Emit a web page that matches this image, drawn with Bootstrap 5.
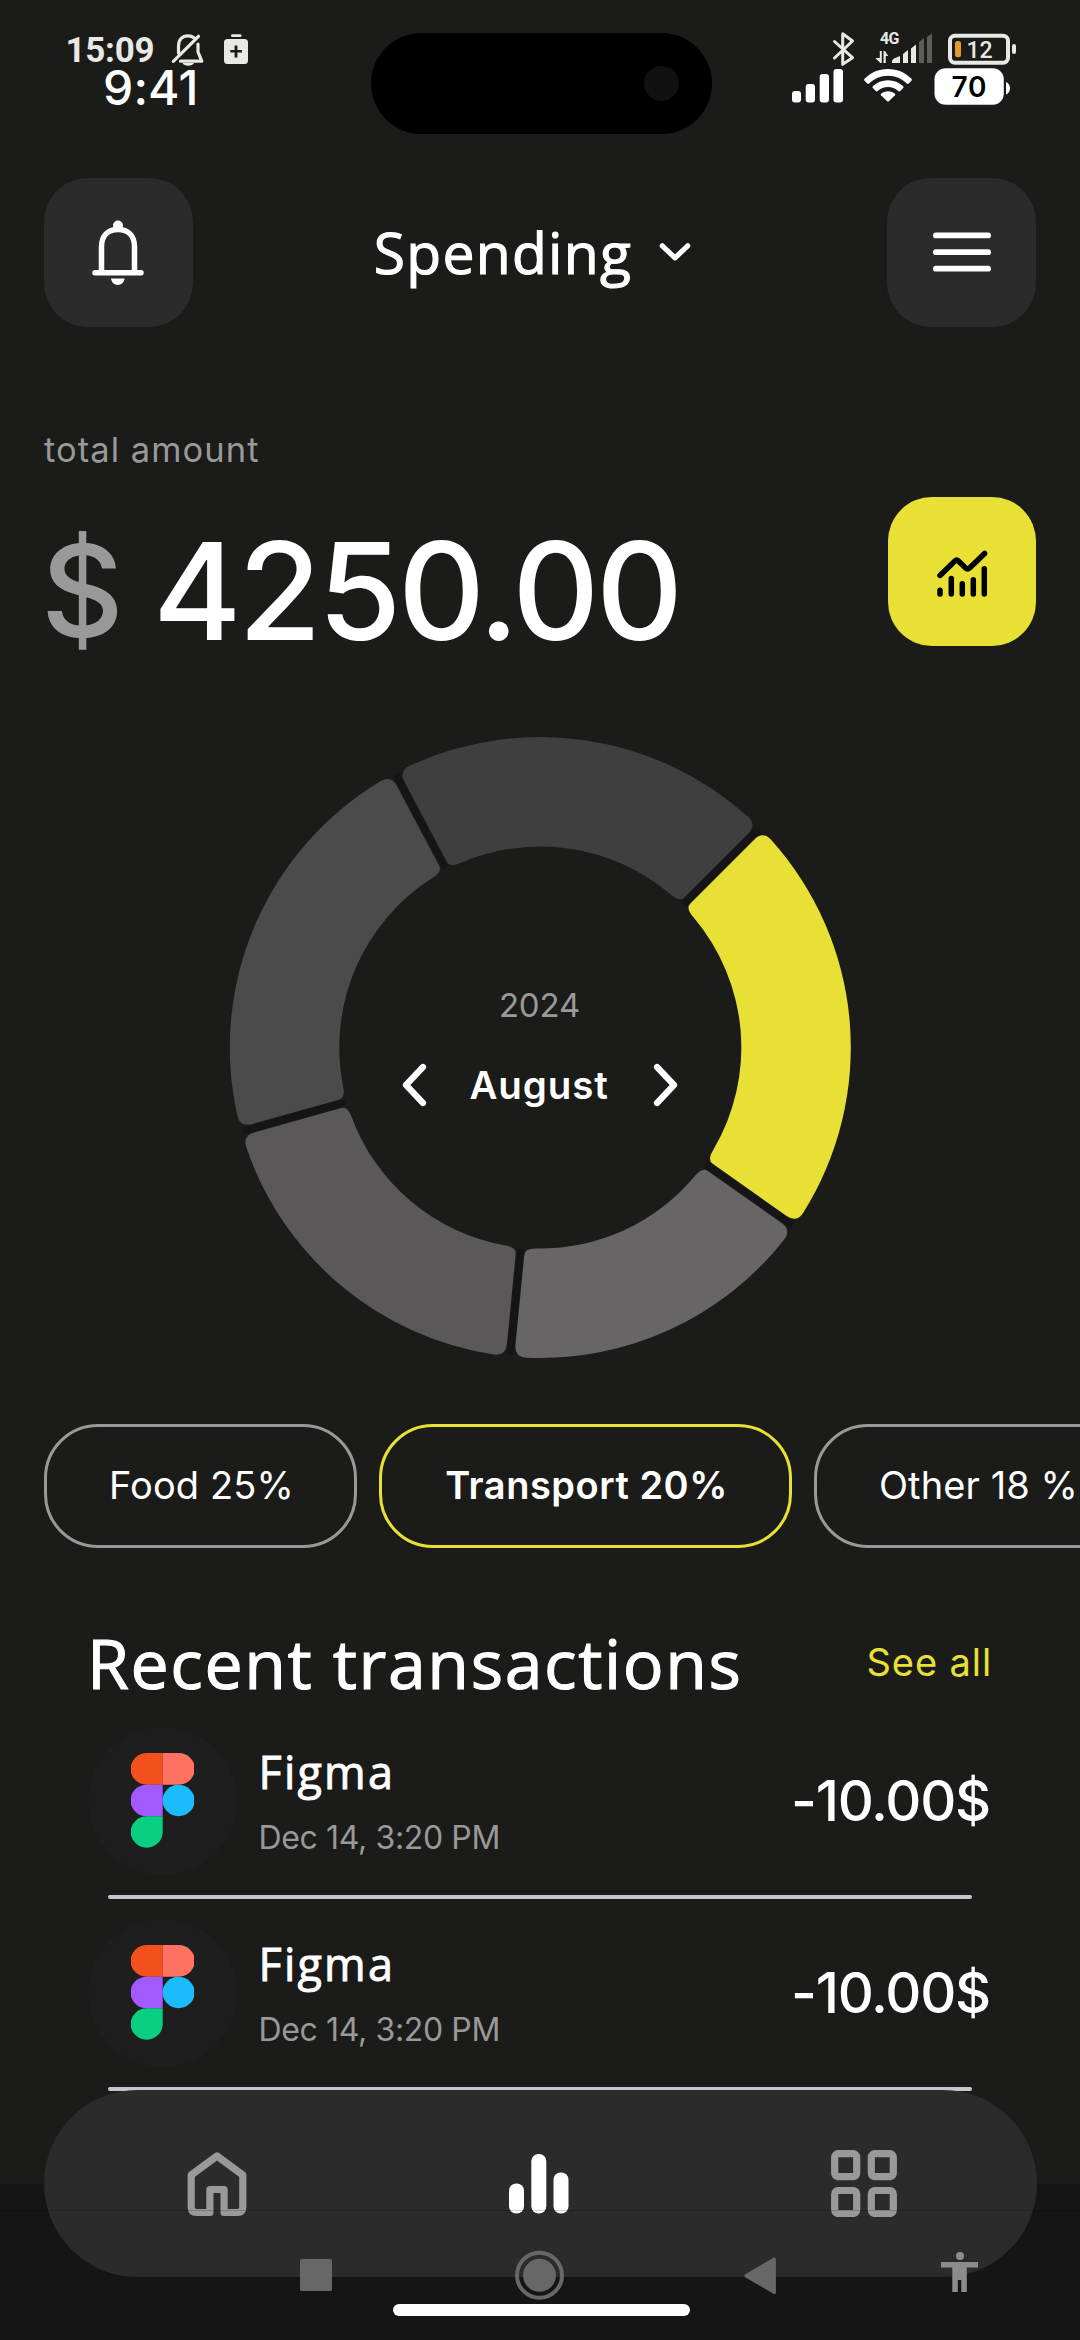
<!DOCTYPE html>
<html lang="en">
<head>
<meta charset="utf-8">
<meta name="viewport" content="width=device-width, initial-scale=1">
<title>Spending</title>
<link href="https://cdn.jsdelivr.net/npm/bootstrap@5.3.0/dist/css/bootstrap.min.css" rel="stylesheet">
<style>
  body { background: #1b1b19; color: #fff; font-family: Inter, "Liberation Sans", sans-serif; font-size: 38px; }
  svg { display: block; flex: none; }
  .phone { width: 1080px; height: 2340px; }
  .title-font { font-family: "Open Sans", "Noto Sans", sans-serif; font-weight: 500; -webkit-text-stroke: 1.1px #fff; }
  .soft { color: #999; }
  .accent { color: #e8e035; }
  .gutter { padding-left: 44px; padding-right: 44px; }

  .sys-bar { top: 0; left: 0; }
  .sys-time { font-family: Roboto, sans-serif; font-weight: 700; font-size: 35px; letter-spacing: -.28px; fill: #e8e8e6; }
  .sys-num { font-family: Roboto, sans-serif; fill: #e8e8e6; }

  .app-bar { height: 178px; padding: 33px 0 0 103px; }
  .app-clock { width: 268px; font-size: 48px; font-weight: 500; line-height: 50px; margin-top: 30px; letter-spacing: .15px; }
  .island { width: 341px; height: 101px; background: #000; padding-right: 33px; }
  .lens { width: 35px; height: 35px; background: #111; }
  .app-icons { margin: 34px 0 0 78px; }
  .batt-num { font: 600 28px Inter, sans-serif; letter-spacing: .9px; }

  .tile { width: 148.5px; height: 148.5px; border-radius: 44px; background: #2b2b2b; border: 0; padding: 0; flex: none; }
  .tile-accent { background: #e8e035; }
  .page-title { font-size: 57px; line-height: 60px; letter-spacing: 1.3px; margin: 0 26px 0 0; }
  .head-mid { padding-right: 14px; }

  .total-label { margin-top: 103px; height: 40px; line-height: 40px; font-size: 34.5px; letter-spacing: 1.05px; }
  .total-row { height: 149px; margin-top: 27px; padding-left: 41px; }
  .total-num { font-size: 135px; font-weight: 500; line-height: 110px; letter-spacing: -3.37px; }
  .total-cur { width: 112px; font-size: 128px; }

  .donut { margin-top: 90px; height: 623px; display: grid; }
  .donut > * { grid-area: 1 / 1; }
  .donut-center { padding-top: 246px; padding-right: 1px; }
  .year { font-size: 33px; line-height: 46px; letter-spacing: -.18px; }
  .month-row { gap: 43px; margin-top: 34px; }
  .month { font-size: 38.5px; font-weight: 600; line-height: 46px; letter-spacing: .85px; width: 140px; }

  .pills { margin-top: 65px; gap: 22px; margin-left: 44px; }
  .pill { height: 124px; border: 3px solid #999; border-radius: 54px; flex: none; letter-spacing: .1px; padding-left: 2px; }
  .pill-on { border-color: #e8e035; font-weight: 600; letter-spacing: .5px; }

  .recent-head { margin-top: 75px; height: 80px; padding: 0 88px 0 87px; }
  .recent-title { font-size: 68px; line-height: 80px; letter-spacing: 1.6px; margin-top: 1px; }
  .see-all { letter-spacing: .9px; }
  .tx-list { margin-top: 24px; padding: 0 90px 0 88px; }
  .tx { height: 148.5px; }
  .avatar { width: 148.5px; height: 148.5px; background: #1e1e1e; }
  .tx-copy { margin-left: 22px; }
  .tx-name { font-size: 45px; line-height: 56px; letter-spacing: 2.2px; margin-top: 17px; -webkit-text-stroke-width: .9px; }
  .tx-date { font-size: 32px; line-height: 40px; letter-spacing: -.36px; margin-top: 18px; }
  .tx-sum { font-size: 56px; font-weight: 500; line-height: 60px; letter-spacing: -1.26px; }
  .tx-line { height: 3.5px; margin: 20px 18px 20px 20px; background: #cac4d0; border-radius: 2px; }

  .bottom-shade { left: 0; bottom: 0; width: 1080px; height: 156.5px; background: #151515; }
  .dock { left: 44px; top: 2090.3px; width: 992.5px; height: 186.5px; border-radius: 94px; background: #2b2b2b; padding: 0 139.5px 0 143px; }
  .seam { left: 0; top: 2210px; width: 1080px; height: 1px; background: rgba(0,0,0,.18); }
  .keys { left: 0; top: 2245px; }
  .home-bar { left: 393px; top: 2304px; width: 297px; height: 11.5px; background: #fff; }
</style>
<script src="https://cdn.jsdelivr.net/npm/bootstrap@5.3.0/dist/js/bootstrap.bundle.min.js"></script>
</head>
<body>
<main class="phone position-relative overflow-hidden d-flex flex-column">

  <!-- iOS style bar of the app frame -->
  <div class="app-bar d-flex align-items-start">
    <div class="app-clock">9:41</div>
    <div class="island rounded-pill d-flex align-items-center justify-content-end"><div class="lens rounded-circle"></div></div>
    <svg class="app-icons" width="222" height="42" viewBox="790 67 222 42" fill="#fff">
      <rect x="792" y="91" width="9" height="11.5" rx="3"/><rect x="805.7" y="84" width="9.3" height="18.5" rx="3"/>
      <rect x="819.7" y="74" width="9.3" height="28.5" rx="3"/><rect x="833.5" y="69" width="9.5" height="33.5" rx="3"/>
      <path d="M888 69c9.500 0 17.500 3.700 23.500 9.800q.9 1 0 1.900l-2.800 2.800q-1 .9-1.900 0c-5-5-11.300-7.800-18.800-7.800s-13.800 2.800-18.800 7.800q-1 .9-1.900 0l-2.800-2.800q-.9-1 0-1.900c6-6.100 14-9.800 23.500-9.800z"/>
      <path d="M888 80.200c6 0 11 2.200 15.200 6q.9 1 0 1.900l-3 2.900q-1 .8-1.900 0c-3-2.700-6.300-4-10.300-4s-7.300 1.300-10.300 4q-1 .8-1.900 0l-3-2.900q-.9-1 0-1.900c4.200-3.800 9.200-6 15.200-6z"/>
      <path d="M888 91.300c2.800 0 5.200.9 7 2.400q.7.700 0 1.500l-6.200 6q-.8.700-1.600 0l-6.200-6q-.7-.8 0-1.500c1.800-1.500 4.200-2.400 7-2.400z"/>
      <rect x="934.5" y="68.300" width="69.300" height="36.500" rx="11"/><path d="M1006 82c5.300 1.700 5.300 10.700 0 12.400z"/>
      <text class="batt-num" x="951.500" y="97" fill="#000">70</text>
    </svg>
  </div>

  <!-- Android system bar lies over it -->
  <svg class="sys-bar position-absolute" width="1080" height="70" viewBox="0 0 1080 70" fill="#e8e8e6">
    <text class="sys-time" x="65.500" y="62">15:09</text>
    <g fill="none" stroke="#e8e8e6" stroke-width="3.200" stroke-linecap="round" stroke-linejoin="round">
      <path d="M178.500 53V46c0-6 3.500-10.200 9.500-10.200 2.500 0 4.500.8 6 2M198 44v8l3.800 9.200H180.500M173.300 61.300l25.200-25"/>
    </g>
    <path d="M182.500 63h11.500c-1.500 3.500-10 3.500-11.500 0z"/>
    <rect x="231" y="34.300" width="10.500" height="2.700" rx="1.300"/>
    <path fill-rule="evenodd" d="M227.500 39h17q3.500 0 3.500 3.500v18q0 3.500-3.500 3.500h-17q-3.500 0-3.500-3.500v-18q0-3.500 3.500-3.500zM234.600 45.500v4.500h-4.300v2.600h4.300v4.800h2.800v-4.800h4.500v-2.600h-4.500v-4.500z"/>
    <path d="M834.500 41.500l18 16.200-9.800 6.600V33.700l9.800 7.300-18 17" fill="none" stroke="#e8e8e6" stroke-width="3" stroke-linecap="round" stroke-linejoin="round"/>
    <text class="sys-num" x="880" y="44" font-size="16" font-weight="700" letter-spacing="-.8">4G</text>
    <path d="M879.800 51h2v12h-1.500l-5-5h4.500zM883.500 63V51h1.500l3.200 5h-2.400v7z"/>
    <path d="M892 61.500q0-2 2-3l6-2.500v7h-8zM903 54l5-4v13h-5zM911 48.500l5-4V63h-5z"/>
    <path fill="#5c5c5a" d="M919 42l5-4v25h-5zM927 37l5-3.500V63h-5z"/>
    <rect x="950" y="35.700" width="58" height="27" rx="5" fill="none" stroke="#e8e8e6" stroke-width="4"/>
    <rect x="1012" y="44" width="4" height="10" rx="2"/>
    <rect x="955" y="41" width="6" height="16.300" rx="2.500" fill="#e09c2e"/>
    <text class="sys-num" x="966.500" y="58" font-size="23" font-weight="500">12</text>
  </svg>

  <header class="gutter d-flex align-items-center justify-content-between">
    <button class="tile d-flex align-items-center justify-content-center" aria-label="Notifications">
      <svg width="56" height="72" viewBox="90 216 56 72" fill="none" stroke="#fff" stroke-width="5.500" stroke-linecap="round">
        <path d="M101.500 272v-25c0-11.500 6.500-17.500 16.500-17.500s16.500 6 16.500 17.500v25M95 272.700h46"/>
        <circle cx="118" cy="225.500" r="5" fill="#fff" stroke="none"/><path d="M111 278.500h13.600c-1 8.500-12.600 8.500-13.600 0z" fill="#fff" stroke="none"/>
      </svg>
    </button>
    <div class="head-mid d-flex align-items-center">
      <h1 class="page-title title-font">Spending</h1>
      <svg width="34" height="20" viewBox="0 0 34 20" fill="none" stroke="#fff" stroke-width="5.200" stroke-linecap="round" stroke-linejoin="round"><path d="M4.300 3.800L17 15.800l12.700-12"/></svg>
    </div>
    <button class="tile d-flex align-items-center justify-content-center" aria-label="Menu">
      <svg width="60" height="40" viewBox="0 0 60 40" fill="#fff"><rect x="1" y=".5" width="58" height="5.800" rx="2.900"/><rect x="1" y="17.300" width="58" height="5.800" rx="2.900"/><rect x="1" y="33.800" width="58" height="5.800" rx="2.900"/></svg>
    </button>
  </header>

  <div class="gutter total-label soft">total amount</div>
  <div class="total-row gutter d-flex align-items-end">
    <div class="total-num total-cur soft">$</div>
    <div class="total-num flex-grow-1">4250.00</div>
    <button class="tile tile-accent" aria-label="Statistics">
      <svg width="148" height="148" viewBox="888 497.300 148 148" fill="none" stroke="#000" stroke-width="5.500" stroke-linecap="round" stroke-linejoin="round">
        <path d="M940 590.500v3.700M951.300 578.700v15.500M962.300 584v10.200M973.300 580v14.200M984.300 569v25.200"/>
        <path d="M940 575.700l14.700-14.200q2-1.900 4 0l6.700 6.700q2.100 1.800 4.200 0l15-14.400"/>
      </svg>
    </button>
  </div>

  <section class="donut">
    <svg id="ring" width="1080" height="623" viewBox="0 736 1080 623"></svg>
    <div class="donut-center d-flex flex-column align-items-center">
      <div class="year soft">2024</div>
      <div class="month-row d-flex align-items-center">
        <svg width="26" height="44" viewBox="0 0 26 44" fill="none" stroke="#fff" stroke-width="6.200" stroke-linecap="round" stroke-linejoin="round"><path d="M22 4L5 22l17 18"/></svg>
        <div class="month">August</div>
        <svg width="26" height="44" viewBox="0 0 26 44" fill="none" stroke="#fff" stroke-width="6.200" stroke-linecap="round" stroke-linejoin="round"><path d="M4 4l17 18L4 40"/></svg>
      </div>
    </div>
  </section>

  <nav class="pills d-flex flex-nowrap">
    <div class="pill d-flex align-items-center justify-content-center" style="width:313px">Food 25%</div>
    <div class="pill pill-on d-flex align-items-center justify-content-center" style="width:413px">Transport 20%</div>
    <div class="pill d-flex align-items-center justify-content-center" style="width:327px">Other 18 %</div>
  </nav>

  <div class="recent-head d-flex align-items-center justify-content-between">
    <h2 class="recent-title title-font mb-0">Recent transactions</h2>
    <span class="see-all accent">See all</span>
  </div>

  <section class="tx-list">
    <div class="tx d-flex align-items-center">
      <div class="avatar rounded-circle d-flex align-items-center justify-content-center">
        <svg width="63.500" height="95" viewBox="0 0 63.500 97" preserveAspectRatio="none"><path fill="#f4501e" d="M31.700 0v32.300h-16a16.150 16.150 0 010-32.300z"/><path fill="#ff7262" d="M31.700 0h16a16.150 16.150 0 010 32.300h-16z"/><path fill="#a259ff" d="M31.700 32.300v32.400h-16a16.200 16.200 0 010-32.400z"/><circle fill="#1abcfe" cx="47.600" cy="48.500" r="16"/><path fill="#0acf83" d="M31.700 64.700v16a16 16 0 11-16-16z"/></svg>
      </div>
      <div class="tx-copy flex-grow-1 align-self-start">
        <div class="tx-name title-font">Figma</div>
        <div class="tx-date soft">Dec 14, 3:20 PM</div>
      </div>
      <div class="tx-sum">-10.00$</div>
    </div>
    <div class="tx-line"></div>
    <div class="tx d-flex align-items-center">
      <div class="avatar rounded-circle d-flex align-items-center justify-content-center">
        <svg width="63.500" height="95" viewBox="0 0 63.500 97" preserveAspectRatio="none"><path fill="#f4501e" d="M31.700 0v32.300h-16a16.150 16.150 0 010-32.300z"/><path fill="#ff7262" d="M31.700 0h16a16.150 16.150 0 010 32.300h-16z"/><path fill="#a259ff" d="M31.700 32.300v32.400h-16a16.200 16.200 0 010-32.400z"/><circle fill="#1abcfe" cx="47.600" cy="48.500" r="16"/><path fill="#0acf83" d="M31.700 64.700v16a16 16 0 11-16-16z"/></svg>
      </div>
      <div class="tx-copy flex-grow-1 align-self-start">
        <div class="tx-name title-font">Figma</div>
        <div class="tx-date soft">Dec 14, 3:20 PM</div>
      </div>
      <div class="tx-sum">-10.00$</div>
    </div>
    <div class="tx-line"></div>
  </section>

  <!-- floating dock over the list -->
  <div class="bottom-shade position-absolute"></div>
  <nav class="dock position-absolute d-flex align-items-center justify-content-between">
    <svg width="60" height="68" viewBox="186.500 2150 60 68" fill="none" stroke="#999" stroke-width="7.200" stroke-linejoin="round"><path d="M216.500 2156l-25.800 19v32q0 5.500 5.500 5.500h13.200v-23h14.200v23h13.200q5.500 0 5.500-5.500v-32z"/></svg>
    <svg width="60" height="62" viewBox="0 0 60 62" fill="#fff"><rect x="0" y="30.500" width="15" height="30" rx="7.200"/><rect x="22.300" y="1" width="15" height="59.500" rx="7.200"/><rect x="44.500" y="19.500" width="15" height="41" rx="7.200"/></svg>
    <svg width="66" height="67" viewBox="0 0 66 67" fill="none" stroke="#999" stroke-width="7.200"><rect x="3.700" y="3.700" width="22" height="23" rx="3.500"/><rect x="40.300" y="3.700" width="22" height="23" rx="3.500"/><rect x="3.700" y="40.500" width="22" height="23" rx="3.500"/><rect x="40.300" y="40.500" width="22" height="23" rx="3.500"/></svg>
  </nav>
  <div class="seam position-absolute"></div>

  <!-- Android navigation keys -->
  <svg class="keys position-absolute" width="1080" height="60" viewBox="0 2245 1080 60" fill="#676767">
    <rect x="300" y="2259" width="32" height="32" rx="1.500"/>
    <circle cx="539.500" cy="2275.300" r="22.500" fill="none" stroke="#676767" stroke-width="4"/><circle cx="539.500" cy="2275.300" r="16.500"/>
    <path d="M745.500 2274.200l28-16.400q2.300-.9 2.400 1.600v32.800q-.1 2.500-2.400 1.600l-28-16.400q-2.200-1.600 0-3.200z"/>
    <g fill="#8c8c8c"><circle cx="960" cy="2256" r="4"/><path d="M941 2262h37v5.600h-11.200v24.300h-5.500V2280h-3.500v11.900h-5.500v-24.300H941z"/></g>
  </svg>
  <div class="home-bar position-absolute rounded-pill"></div>
</main>

<script>
  // Spending ring: each slice is an annular sector with softened corners.
  const cx = 540.3, cy = 1047.5, R = 310.5, r = 201, gap = 4.3, soft = 12;
  const cuts = [45, 125.2, 185.6, 254.3, 332.100];
  const colors = ['#e8e035', '#676565', '#5a5858', '#4b4b4b', '#3f3f3f'];
  const rad = d => d * Math.PI / 180;
  const pt = (rr, a) => (cx + rr * Math.sin(a)).toFixed(2) + ' ' + (cy - rr * Math.cos(a)).toFixed(2);
  let out = '';
  cuts.forEach((d, i) => {
    const a0 = rad(d), a1 = rad(i < 4 ? cuts[i + 1] : 360 + cuts[0]);
    const o = rr => gap / rr, s = rr => soft / rr;
    out += `<path fill="${colors[i]}" d="M${pt(R, a0 + o(R) + s(R))}A${R} ${R} 0 0 1 ${pt(R, a1 - o(R) - s(R))}` +
      `Q${pt(R, a1 - o(R))} ${pt(R - soft, a1 - o(R - soft))}L${pt(r + 7, a1 - o(r + 7))}` +
      `Q${pt(r, a1 - o(r))} ${pt(r, a1 - o(r) - s(r))}A${r} ${r} 0 0 0 ${pt(r, a0 + o(r) + s(r))}` +
      `Q${pt(r, a0 + o(r))} ${pt(r + 7, a0 + o(r + 7))}L${pt(R - soft, a0 + o(R - soft))}Q${pt(R, a0 + o(R))} ${pt(R, a0 + o(R) + s(R))}z"/>` +
      `<path d="M${pt(r + 5, a0)}L${pt(R - 5, a0)}" stroke="#151515" stroke-width="7" stroke-linecap="round"/>`;
  });
  document.getElementById('ring').innerHTML = out;
</script>
</body>
</html>
